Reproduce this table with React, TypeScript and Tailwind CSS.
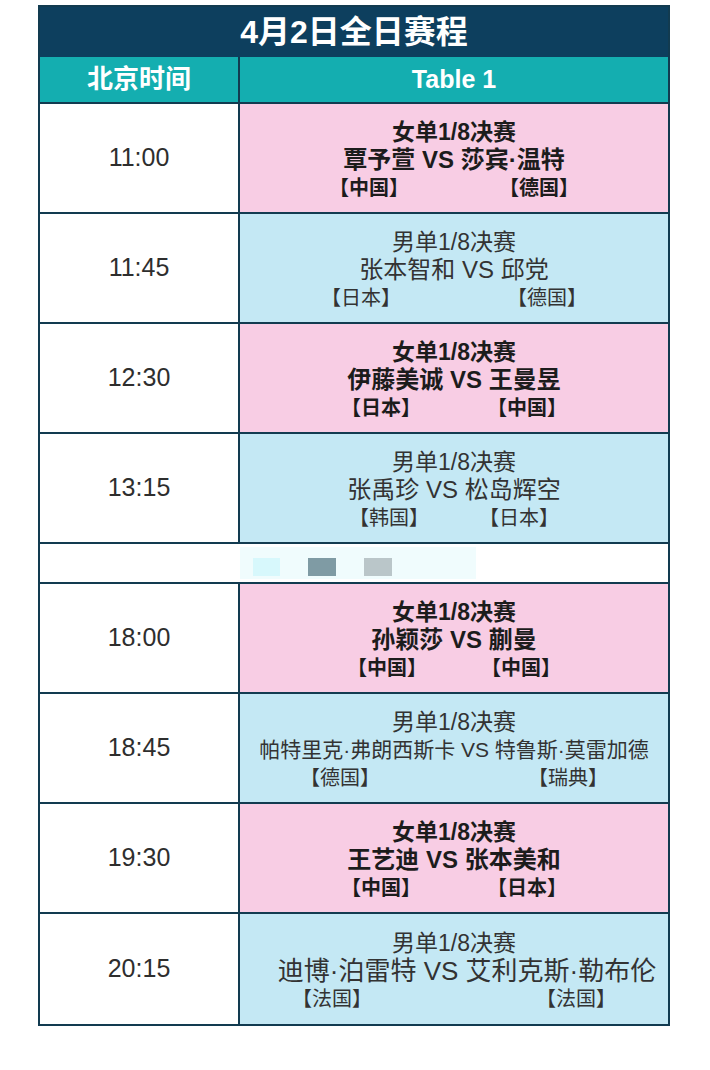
import React from 'react';

type Match = {
  time: string;
  women: boolean;
  title: string;
  players: string;
  left: string;
  right: string;
  gap: string;
  nameSize: string;
};

const morning: Match[] = [
  { time: '11:00', women: true, title: '女单1/8决赛', players: '覃予萱 VS 莎宾·温特', left: '【中国】', right: '【德国】', gap: 'gap-[90px]', nameSize: 'text-[24px]' },
  { time: '11:45', women: false, title: '男单1/8决赛', players: '张本智和 VS 邱党', left: '【日本】', right: '【德国】', gap: 'gap-[106px]', nameSize: 'text-[24px]' },
  { time: '12:30', women: true, title: '女单1/8决赛', players: '伊藤美诚 VS 王曼昱', left: '【日本】', right: '【中国】', gap: 'gap-[66px]', nameSize: 'text-[24px]' },
  { time: '13:15', women: false, title: '男单1/8决赛', players: '张禹珍 VS 松岛辉空', left: '【韩国】', right: '【日本】', gap: 'gap-[50px]', nameSize: 'text-[24px]' },
];

const evening: Match[] = [
  { time: '18:00', women: true, title: '女单1/8决赛', players: '孙颖莎 VS 蒯曼', left: '【中国】', right: '【中国】', gap: 'gap-[54px]', nameSize: 'text-[24px]' },
  { time: '18:45', women: false, title: '男单1/8决赛', players: '帕特里克·弗朗西斯卡 VS 特鲁斯·莫雷加德', left: '【德国】', right: '【瑞典】', gap: 'gap-[148px]', nameSize: 'text-[21px]' },
  { time: '19:30', women: true, title: '女单1/8决赛', players: '王艺迪 VS 张本美和', left: '【中国】', right: '【日本】', gap: 'gap-[66px]', nameSize: 'text-[24px]' },
  { time: '20:15', women: false, title: '男单1/8决赛', players: '迪博·泊雷特 VS 艾利克斯·勒布伦', left: '【法国】', right: '【法国】', gap: 'gap-[164px]', nameSize: 'text-[26px] ml-[26px]' },
];

const MatchRow = ({ m, last }: { m: Match; last?: boolean }) => (
  <div className={`flex h-[110px] ${last ? '' : 'border-b-2 border-[#123b50]'}`}>
    <div className="w-[200px] shrink-0 border-r-2 border-[#123b50] bg-white flex items-center justify-center text-[25px] text-[#2e2e2e]">
      {m.time}
    </div>
    <div
      className={`flex-1 flex flex-col items-center justify-center pt-[4px] leading-[28px] ${
        m.women ? 'bg-[#f8cde4] font-bold text-[#1c1c1c]' : 'bg-[#c4e8f4] text-[#333333]'
      }`}
    >
      <div className="text-[23px]">{m.title}</div>
      <div className={m.nameSize}>{m.players}</div>
      <div className={`flex text-[20px] ${m.gap}`}>
        <span>{m.left}</span>
        <span>{m.right}</span>
      </div>
    </div>
  </div>
);

export default function App() {
  return (
    <div
      className="w-[710px] h-[1070px] bg-white pt-[5px] px-[38px]"
      style={{ fontFamily: '"Liberation Sans", "Noto Sans CJK SC", sans-serif' }}
    >
      <div className="w-[632px] border-2 border-[#123b50]">
        <div className="h-[50px] bg-[#0d3f5e] flex items-center justify-center text-white font-bold text-[32px]">
          4月2日全日赛程
        </div>
        <div className="flex h-[47px] bg-[#14aeb0] border-b-2 border-[#123b50] text-white font-bold">
          <div className="w-[200px] shrink-0 border-r-2 border-[#123b50] flex items-center justify-center text-[26px]">
            北京时间
          </div>
          <div className="flex-1 flex items-center justify-center text-[25px]">Table 1</div>
        </div>

        {morning.map((m) => (
          <MatchRow key={m.time} m={m} />
        ))}

        {/* break row, blurred in the original */}
        <div className="h-[40px] border-b-2 border-[#123b50] bg-white flex items-start pl-[200px] pt-[3px]">
          <div className="w-[236px] h-[32px] bg-[#f0fcfd] flex items-end pb-[3px] gap-[28px] pl-[13px]">
            <div className="w-[27px] h-[18px] bg-[#d7f8fc]" />
            <div className="w-[28px] h-[18px] bg-[#7f9ba4]" />
            <div className="w-[28px] h-[18px] bg-[#bac6c9]" />
          </div>
        </div>

        {evening.map((m, i) => (
          <MatchRow key={m.time} m={m} last={i === evening.length - 1} />
        ))}
      </div>
    </div>
  );
}
